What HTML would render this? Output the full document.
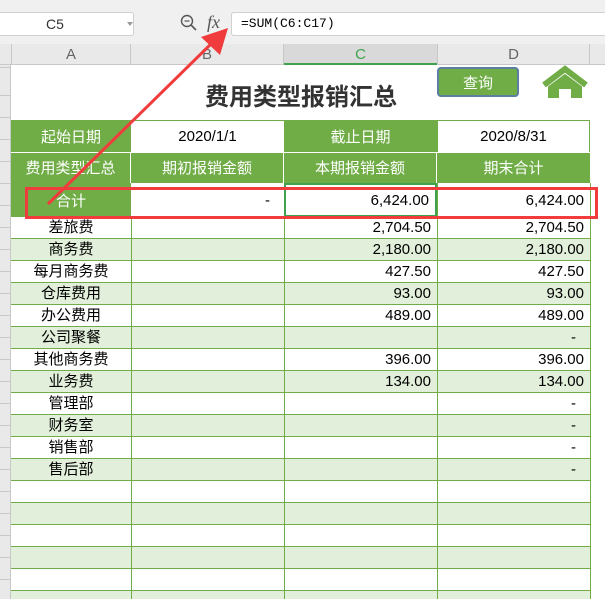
<!DOCTYPE html><html><head><meta charset="utf-8"><style>
*{margin:0;padding:0;box-sizing:border-box}
body{width:605px;height:599px;overflow:hidden;background:#fff;position:relative;font-family:"Liberation Sans","Noto Sans CJK SC",sans-serif;font-size:15px;color:#000}
.a{position:absolute}
.c{position:absolute;display:flex;align-items:center;justify-content:center;white-space:nowrap}
.r{justify-content:flex-end;padding-right:6px}
.g{background:#70ad47;color:#fff}
</style></head><body>
<div class="a" style="left:0;top:0;width:605px;height:44px;background:#f0f0f0"></div>
<div class="a" style="left:-10px;top:12px;width:144px;height:24px;background:#fff;border:1px solid #d0d0d0;border-radius:3px"></div>
<div class="c" style="left:30px;top:14px;width:50px;height:20px;font-size:14px;color:#333">C5</div>
<div class="a" style="left:127px;top:22px;width:0;height:0;border-left:3px solid transparent;border-right:3px solid transparent;border-top:4px solid #999"></div>
<svg class="a" style="left:180px;top:14px" width="18" height="18"><circle cx="7" cy="7" r="5.5" fill="none" stroke="#555" stroke-width="1.4"/><line x1="11" y1="11" x2="16" y2="16" stroke="#555" stroke-width="1.6"/><line x1="4.5" y1="7" x2="9.5" y2="7" stroke="#555" stroke-width="1.2"/></svg>
<div class="a" style="left:207px;top:12px;font-family:'Liberation Serif',serif;font-style:italic;font-size:18px;color:#555">fx</div>
<div class="a" style="left:231px;top:12px;width:380px;height:24px;background:#fff;border:1px solid #d0d0d0;border-radius:3px"></div>
<div class="a" style="left:241px;top:16px;font-family:'Liberation Mono',monospace;font-size:13px;color:#000">=SUM(C6:C17)</div>
<div class="a" style="left:0;top:44px;width:605px;height:21px;background:#e9e9e9;border-bottom:1px solid #c8c8c8"></div>
<div class="a" style="left:284px;top:44px;width:153px;height:21px;background:#d9d9d9;border-bottom:2px solid #3fa34d"></div>
<div class="c" style="left:11px;top:44px;width:120px;height:21px;color:#666;border-left:1px solid #c8c8c8;border-right:1px solid #c8c8c8">A</div>
<div class="c" style="left:131px;top:44px;width:153px;height:21px;color:#666;border-right:1px solid #c8c8c8">B</div>
<div class="c" style="left:284px;top:44px;width:153px;height:21px;color:#3fa34d">C</div>
<div class="c" style="left:437px;top:44px;width:153px;height:21px;color:#666;border-left:1px solid #c8c8c8;border-right:1px solid #c8c8c8">D</div>
<div class="a" style="left:0;top:65px;width:11px;height:534px;background:#e9e9e9;border-right:1px solid #c8c8c8"></div>
<div class="c" style="left:131px;top:70px;width:340px;height:48px;font-size:24px;font-weight:bold;color:#333">费用类型报销汇总</div>
<div class="c" style="left:437px;top:67px;width:82px;height:30px;background:#70ad47;border:2px solid #5b7fa0;border-radius:4px;color:#fff;font-size:15px">查询</div>
<svg class="a" style="left:540px;top:64px" width="50" height="36"><path d="M8,20 L25,8 L42,20 L42,34 L31,34 L31,25 L19,25 L19,34 L8,34 Z" fill="#70ad47"/><polyline points="2,25 25,8 48,25" fill="none" stroke="#fff" stroke-width="3"/><polyline points="4,21 25,5 46,21" fill="none" stroke="#70ad47" stroke-width="6"/></svg>
<div class="c g" style="left:11px;top:120px;width:120px;height:32px">起始日期</div>
<div class="c" style="left:131px;top:120px;width:153px;height:32px;border-top:1px solid #70ad47">2020/1/1</div>
<div class="c g" style="left:284px;top:120px;width:153px;height:32px">截止日期</div>
<div class="c" style="left:437px;top:120px;width:153px;height:32px;border:1px solid #70ad47;border-bottom:none">2020/8/31</div>
<div class="a g" style="left:11px;top:152px;width:579px;height:31px;border-top:1px solid #fff"></div>
<div class="c" style="left:11px;top:152px;width:120px;height:31px;color:#fff;border-right:1px solid #fff">费用类型汇总</div>
<div class="c" style="left:131px;top:152px;width:153px;height:31px;color:#fff;border-right:1px solid #fff">期初报销金额</div>
<div class="c" style="left:284px;top:152px;width:153px;height:31px;color:#fff;border-right:1px solid #fff">本期报销金额</div>
<div class="c" style="left:437px;top:152px;width:153px;height:31px;color:#fff">期末合计</div>
<div class="c g" style="left:11px;top:183px;width:120px;height:34px">合计</div>
<div class="c r" style="left:131px;top:183px;width:153px;height:34px;padding-right:14px">-</div>
<div class="c r" style="left:284px;top:183px;width:153px;height:34px;border:2px solid #3fa34d">6,424.00</div>
<div class="c r" style="left:437px;top:183px;width:153px;height:34px">6,424.00</div>
<div class="a" style="left:11px;top:217px;width:579px;height:382px;background:repeating-linear-gradient(#fff 0 22px,#e2efda 22px 44px)"></div>
<div class="a" style="left:11px;top:216px;width:579px;height:383px;background:repeating-linear-gradient(#70ad47 0 1px,transparent 1px 22px)"></div>
<div class="a" style="left:131px;top:216px;width:1px;height:383px;background:#70ad47"></div>
<div class="a" style="left:284px;top:216px;width:1px;height:383px;background:#70ad47"></div>
<div class="a" style="left:437px;top:183px;width:1px;height:416px;background:#70ad47"></div>
<div class="a" style="left:590px;top:183px;width:1px;height:416px;background:#70ad47"></div>
<div class="a" style="left:11px;top:217px;width:580px;line-height:22px">
<div style="display:flex"><div style="width:120px;text-align:center">差旅费</div><div style="width:153px"></div><div style="width:153px;text-align:right;padding-right:6px">2,704.50</div><div style="width:153px;text-align:right;padding-right:6px">2,704.50</div></div>
<div style="display:flex"><div style="width:120px;text-align:center">商务费</div><div style="width:153px"></div><div style="width:153px;text-align:right;padding-right:6px">2,180.00</div><div style="width:153px;text-align:right;padding-right:6px">2,180.00</div></div>
<div style="display:flex"><div style="width:120px;text-align:center">每月商务费</div><div style="width:153px"></div><div style="width:153px;text-align:right;padding-right:6px">427.50</div><div style="width:153px;text-align:right;padding-right:6px">427.50</div></div>
<div style="display:flex"><div style="width:120px;text-align:center">仓库费用</div><div style="width:153px"></div><div style="width:153px;text-align:right;padding-right:6px">93.00</div><div style="width:153px;text-align:right;padding-right:6px">93.00</div></div>
<div style="display:flex"><div style="width:120px;text-align:center">办公费用</div><div style="width:153px"></div><div style="width:153px;text-align:right;padding-right:6px">489.00</div><div style="width:153px;text-align:right;padding-right:6px">489.00</div></div>
<div style="display:flex"><div style="width:120px;text-align:center">公司聚餐</div><div style="width:153px"></div><div style="width:153px"></div><div style="width:153px;text-align:right;padding-right:14px">-</div></div>
<div style="display:flex"><div style="width:120px;text-align:center">其他商务费</div><div style="width:153px"></div><div style="width:153px;text-align:right;padding-right:6px">396.00</div><div style="width:153px;text-align:right;padding-right:6px">396.00</div></div>
<div style="display:flex"><div style="width:120px;text-align:center">业务费</div><div style="width:153px"></div><div style="width:153px;text-align:right;padding-right:6px">134.00</div><div style="width:153px;text-align:right;padding-right:6px">134.00</div></div>
<div style="display:flex"><div style="width:120px;text-align:center">管理部</div><div style="width:153px"></div><div style="width:153px"></div><div style="width:153px;text-align:right;padding-right:14px">-</div></div>
<div style="display:flex"><div style="width:120px;text-align:center">财务室</div><div style="width:153px"></div><div style="width:153px"></div><div style="width:153px;text-align:right;padding-right:14px">-</div></div>
<div style="display:flex"><div style="width:120px;text-align:center">销售部</div><div style="width:153px"></div><div style="width:153px"></div><div style="width:153px;text-align:right;padding-right:14px">-</div></div>
<div style="display:flex"><div style="width:120px;text-align:center">售后部</div><div style="width:153px"></div><div style="width:153px"></div><div style="width:153px;text-align:right;padding-right:14px">-</div></div>
</div>
<div class="a" style="left:0;top:65px;width:11px;height:534px;background:repeating-linear-gradient(transparent 0 21px,#c8c8c8 21px 22px);background-position:0 9px"></div>
<div class="a" style="left:25px;top:187px;width:573px;height:32px;border:3px solid #f03c3c"></div>
<svg class="a" style="left:0;top:0" width="605" height="599"><line x1="48" y1="204" x2="212" y2="43" stroke="#f03c3c" stroke-width="3"/><polygon points="228,28 220,55 201,37" fill="#f03c3c"/></svg>
</body></html>
